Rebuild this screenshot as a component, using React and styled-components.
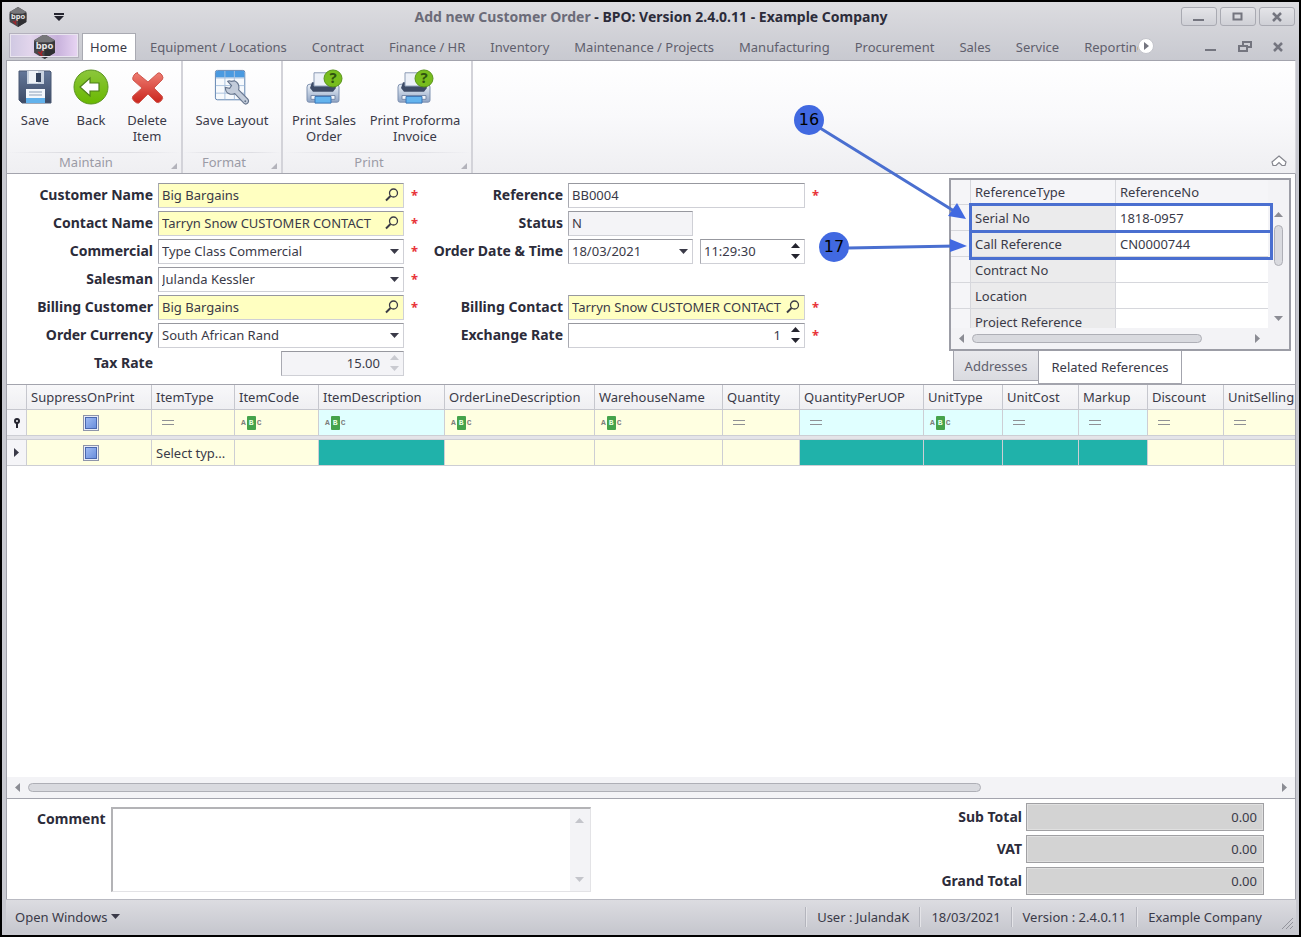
import React from 'react';
import styled, { createGlobalStyle, ThemeProvider } from 'styled-components';

const theme = {
  font: '"Noto Sans", "Open Sans", sans-serif',
  text: '#3a3a48',
  strong: '#2c2c3a',
  muted: '#5f5f6d',
  line: '#a3a4ad',
  softLine: '#cfd0d6',
  lookup: '#ffffc1',
  accent: '#4169e1',
};

const GlobalStyle = createGlobalStyle`
  *, *::before, *::after { box-sizing: border-box; }
  body { margin: 0; }
  body, button, input, select, textarea {
    font-family: ${theme.font};
    font-size: 13px;
    line-height: 16px;
    color: ${theme.text};
  }
  button { padding: 0; border: 0; background: none; }
  svg { display: block; flex: none; }
`;

const Window = styled.div`
  min-height: 100vh;
  display: flex;
  flex-direction: column;
  padding: 0 3px 2px 4px;
  border: 2px solid #000;
  background: linear-gradient(#dcdce0, #c8c9d0 58px, #c8c9d0);
  overflow: hidden;
`;

/* ---------- title bar ---------- */

const TitleBar = styled.header`
  display: grid;
  grid-template-columns: 1fr auto 1fr;
  align-items: center;
  height: 29px;
`;

const TitleLeft = styled.div`
  display: flex;
  align-items: center;
  gap: 26px;
  padding-left: 2px;
`;

const Title = styled.h1`
  margin: 0;
  font-size: 14px;
  font-weight: 700;
  white-space: nowrap;
  color: ${({ theme }) => theme.strong};

  span { color: #6b6b78; }
`;

const WindowButtons = styled.div`
  display: flex;
  justify-content: flex-end;
  gap: 3px;
  padding-right: 1px;
`;

const WindowButton = styled.button`
  display: grid;
  place-items: center;
  width: 36px;
  height: 19px;
  border: 1px solid #a9aab2;
  border-radius: 3px;
  background: linear-gradient(#e4e4e8, #cfd0d6);
  color: #74757f;
`;

/* ---------- ribbon tabs ---------- */

const TabRow = styled.nav`
  display: flex;
  align-items: flex-end;
  height: 29px;
  padding-left: 3px;
`;

const AppButton = styled.button`
  display: grid;
  place-items: center;
  width: 70px;
  height: 25px;
  margin: 0 3px 2px 0;
  border: 1px solid #b4b1bd;
  outline: 1px solid #e9e5ef;
  outline-offset: -2px;
  background: linear-gradient(90deg, #cfc8e2, #e2d5ec 30%, #c8b2dc 70%, #e8d5f3);
`;

const RibbonTab = styled.button`
  flex: ${({ $clip }) => ($clip ? '0 0 67px' : 'none')};
  height: 27px;
  padding: ${({ $active }) => ($active ? '0 8px 0 7px' : '0 12px 0 11px')};
  padding-right: ${({ $clip }) => $clip && '0'};
  margin-right: ${({ $active }) => ($active ? '2px' : '0')};
  border: 1px solid transparent;
  border-width: 1px 1px 0;
  overflow: hidden;
  text-align: left;
  white-space: nowrap;
  color: ${({ theme, $active }) => ($active ? theme.text : theme.muted)};
  ${({ $active }) => $active && 'background: #fff; border-color: #a9aab2;'}
`;

const ScrollTabs = styled.button`
  align-self: center;
  margin-left: -1px;
`;

const ChildButtons = styled.div`
  display: flex;
  align-items: center;
  gap: 21px;
  height: 27px;
  margin-left: auto;
  padding-right: 12px;

  button { color: #74757f; }
`;

/* ---------- ribbon ---------- */

const Ribbon = styled.section`
  display: flex;
  height: 114px;
  border: 1px solid ${({ theme }) => theme.line};
  border-right-color: #d8d8de;
  background: linear-gradient(#fff, #f9f9fb 50%, #efeff2);
`;

const Group = styled.div`
  display: flex;
  flex-direction: column;
  border-right: 2px solid #d3d3d9;
`;

const GroupButtons = styled.div`
  flex: 1;
  display: flex;
  padding-right: ${({ $flush }) => ($flush ? '0' : '6px')};
`;

const GroupCaption = styled.div`
  position: relative;
  height: 21px;
  padding: 2px 16px 0 0;
  background: linear-gradient(90deg, transparent, #dedee3 30%, #dedee3 70%, transparent) top / 100% 1px no-repeat;
  text-align: center;
  color: #9b9ba6;

  &::after {
    content: '';
    position: absolute;
    right: 4px;
    bottom: 4px;
    border: 3px solid #b3b3bb;
    border-top-color: transparent;
    border-left-color: transparent;
  }
`;

const ToolButton = styled.button`
  display: flex;
  flex-direction: column;
  align-items: center;
  gap: 7px;
  width: ${({ $width }) => $width}px;
  padding-top: 8px;
`;

const Collapse = styled.button`
  align-self: flex-end;
  margin: 0 8px 6px auto;
`;

/* ---------- order form ---------- */

const FormArea = styled.form`
  display: flex;
  align-items: flex-start;
  min-height: 210px;
  padding: 4px 4px 0 30px;
  border-left: 1px solid ${({ theme }) => theme.line};
  border-right: 1px solid ${({ theme }) => theme.line};
  background: #fff;
`;

const Fields = styled.div`
  display: grid;
  grid-template-columns: ${({ $label, $field }) => `${$label}px ${$field}px 20px`};
  grid-auto-rows: 24px;
  gap: 4px 5px;
  align-items: center;
  padding-top: 5px;
`;

const Label = styled.label`
  grid-column: 1;
  justify-self: end;
  font-size: 14px;
  font-weight: 700;
  white-space: nowrap;
  color: ${({ theme }) => theme.strong};
`;

const Box = styled.div`
  display: flex;
  align-items: center;
  justify-self: ${({ $end }) => ($end ? 'end' : 'start')};
  width: ${({ $width }) => ($width ? `${$width}px` : '100%')};
  height: 25px;
  padding-right: 4px;
  border: 1px solid ${({ theme }) => theme.softLine};
  border-top-color: #97989f;
  border-left-color: #a9aab2;
  background: ${({ theme, $kind }) =>
    $kind === 'lookup' ? theme.lookup : $kind === 'readonly' ? '#f4f4f7' : '#fff'};
`;

const control = `
  flex: 1;
  min-width: 0;
  width: 100%;
  height: 100%;
  border: 0;
  outline: 0;
  background: transparent;
  appearance: none;
`;

const Input = styled.input`
  ${control}
  padding: 0 2px 0 3px;
  text-align: ${({ $right }) => ($right ? 'right' : 'left')};
  ${({ $right }) => $right && 'padding-right: 10px;'}
`;

const Select = styled.select`
  ${control}
  padding: 0 3px;
`;

const Pair = styled.div`
  display: flex;
  justify-content: space-between;
`;

const Required = styled.span`
  grid-column: 3;
  padding-left: 2px;
  font-weight: 700;
  color: #e8343a;
`;

const Spinner = styled.span`
  display: grid;
  gap: 6px;
  color: ${({ $off }) => ($off ? '#c9cad0' : '#24242e')};
`;

/* ---------- related references ---------- */

const References = styled.aside`
  position: relative;
  width: 342px;
  margin-left: auto;
`;

const Panel = styled.div`
  display: grid;
  grid-template-columns: 1fr 21px;
  grid-template-rows: 25px 123px 21px;
  border: 2px solid #9c9da6;
  background: #f3f3f6;
`;

const ClipArea = styled.div`
  grid-area: 1 / 1 / 3 / 2;
  overflow: hidden;
  background: #fff;
`;

const RefTable = styled.table`
  width: 100%;
  border-collapse: separate;
  border-spacing: 0;
  table-layout: fixed;

  th, td {
    height: 26px;
    padding: 0 4px;
    border-right: 1px solid #d6d7dc;
    border-bottom: 1px solid #d6d7dc;
    text-align: left;
    font-weight: 400;
    background: #fff;
  }
  thead th { height: 25px; background: #f5f5f8; }
  tbody th { background: #f5f5f8; }
  tbody td:nth-child(2) { background: #ebebec; }
  th:last-child, td:last-child { border-right: 0; }
`;

const VScroll = styled.div`
  grid-area: 2 / 2;
  display: flex;
  flex-direction: column;
  align-items: center;
  padding: 7px 0;
  gap: 8px;
  color: #8b8c94;
`;

const HScroll = styled.div`
  grid-area: 3 / 1;
  display: flex;
  align-items: center;
  gap: 8px;
  height: 21px;
  padding: 0 8px;
  background: #f3f3f6;
  color: #8b8c94;
`;

const Thumb = styled.span`
  flex: ${({ $grow }) => $grow || 'none'};
  width: ${({ $tall }) => $tall && '9px'};
  height: ${({ $tall }) => $tall || 9}px;
  border: 1px solid #aeafb6;
  border-radius: 5px;
  background: #d9dadf;
`;

const Gap = styled.span`
  flex: ${({ $grow }) => $grow};
`;

const PanelTabs = styled.div`
  display: flex;
  align-items: flex-start;
  padding-left: 4px;
`;

const PanelTab = styled.button`
  width: ${({ $active }) => ($active ? 144 : 86)}px;
  height: ${({ $active }) => ($active ? 33 : 30)}px;
  border: 1px solid #a3a4ad;
  border-top: 0;
  margin-left: ${({ $active }) => ($active ? '-1px' : '0')};
  white-space: nowrap;
  background: ${({ $active }) => ($active ? '#fff' : 'linear-gradient(#e9e9ed, #dadbe0)')};
  color: ${({ theme, $active }) => ($active ? theme.text : theme.muted)};
`;

const Highlight = styled.div`
  position: absolute;
  top: ${({ $top }) => $top}px;
  left: 20px;
  right: 18px;
  height: 30px;
  border: 3px solid #4a6fd0;
  pointer-events: none;
`;

const Arrows = styled.svg`
  position: absolute;
  top: -80px;
  left: -160px;
  pointer-events: none;
`;

const Callout = styled.span`
  position: absolute;
  top: ${({ $top }) => $top}px;
  left: ${({ $left }) => $left}px;
  width: 30px;
  height: 30px;
  border-radius: 50%;
  background: ${({ theme }) => theme.accent};
  font-family: "DejaVu Sans", sans-serif;
  font-size: 16px;
  line-height: 30px;
  text-align: center;
  color: #000;
`;

/* ---------- order lines ---------- */

const Lines = styled.section`
  flex: 1;
  display: flex;
  flex-direction: column;
  min-height: 300px;
  border: 1px solid ${({ theme }) => theme.line};
  background: #fff;
`;

const LinesClip = styled.div`
  flex: 1;
  overflow: hidden;
`;

const LineTable = styled.table`
  width: 1321px;
  table-layout: fixed;
  border-collapse: separate;
  border-spacing: 0;

  th {
    height: 25px;
    padding: 0 4px;
    border-right: 1px solid #c6c7ce;
    border-bottom: 1px solid #c6c7ce;
    background: linear-gradient(#f8f8fa, #efeff2);
    font-weight: 400;
    text-align: left;
    white-space: nowrap;
  }
`;

const cellColors = { cream: '#ffffe1', cyan: '#e0ffff', teal: '#20b2aa', head: '#f5f5f8' };

const Cell = styled.td`
  height: 26px;
  padding: 0 0 0 4px;
  border-right: 1px solid #cdced4;
  border-bottom: 1px solid #cdced4;
  background: ${({ $tone }) => cellColors[$tone]};
  white-space: nowrap;
`;

const Divider = styled.td`
  height: 4px;
  padding: 0;
  border-bottom: 1px solid #cdced4;
  background: #e4e4e8;
`;

const RowMark = styled.div`
  display: grid;
  place-items: center;
  padding-right: 4px;
`;

const CheckBox = styled.input`
  appearance: none;
  display: block;
  width: 16px;
  height: 16px;
  margin: 0 auto;
  border: 1px solid #8e95aa;
  background: linear-gradient(135deg, #a9c3f5, #5f86d8);
  box-shadow: inset 0 0 0 1px #e8ecf6, inset 0 0 0 2px #4968ae;
`;

const Equals = styled.span`
  display: block;
  width: 12px;
  height: 5px;
  margin-left: 6px;
  border: 1px solid #8f9095;
  border-width: 1px 0;
`;

const Abc = styled.span`
  display: flex;
  align-items: center;
  gap: 1px;
  margin-left: 2px;
  font-family: "Liberation Mono", monospace;
  font-size: 8px;
  line-height: 14px;
  font-weight: 700;
  color: #7d7d7d;

  b {
    padding: 0 2px;
    border-radius: 1px;
    background: #45a34b;
    color: #e9ffe6;
  }
`;

/* ---------- totals and status ---------- */

const Footer = styled.section`
  display: flex;
  justify-content: space-between;
  height: 100px;
  padding: 4px 31px 0 30px;
  border-left: 1px solid ${({ theme }) => theme.line};
  border-right: 1px solid ${({ theme }) => theme.line};
  background: #fff;
`;

const CommentRow = styled.div`
  display: flex;
  gap: 5px;
  padding-top: 4px;

  label { padding-top: 4px; }
`;

const CommentBox = styled.div`
  display: flex;
  width: 480px;
  height: 85px;
  border: 1px solid #e3e3e6;
  border-top: 2px solid #b3b3b6;
  border-left: 2px solid #b3b3b6;
`;

const CommentArea = styled.textarea`
  flex: 1;
  border: 0;
  outline: 0;
  resize: none;
`;

const CommentScroll = styled.div`
  display: flex;
  flex-direction: column;
  justify-content: space-between;
  align-items: center;
  width: 20px;
  padding: 9px 0;
  background: #f3f3f6;
  color: #c4c5cb;
`;

const Totals = styled.div`
  display: grid;
  grid-template-columns: auto 238px;
  grid-auto-rows: 28px;
  gap: 4px 4px;
  align-items: center;
`;

const Total = styled.input`
  height: 28px;
  padding: 0 6px;
  border: 1px solid #a0a0a3;
  background: #d3d3d3;
  outline: 1px solid #e0e0e0;
  outline-offset: -2px;
  text-align: right;
`;

const StatusBar = styled.footer`
  display: flex;
  align-items: center;
  height: 34px;
  padding: 0 2px 0 9px;
  border-top: 1px solid #b9bac2;
  background: linear-gradient(#dcdce1, #c6c7ce);
`;

const OpenWindows = styled.button`
  display: flex;
  align-items: center;
  gap: 4px;
  margin-right: auto;
`;

const StatusItem = styled.span`
  padding: 2px 10px 2px 11px;
  border-left: 1px solid #b4b5bd;
  box-shadow: inset 1px 0 #e4e4e8;
`;

const Grip = styled.svg`
  align-self: flex-end;
  margin: 0 0 3px 9px;
`;

/* ---------- drawings ---------- */

const shapes = {
  down: 'M0 0h9L4.500 5z',
  up: 'M0 5h9L4.500 0z',
  left: 'M5 0v9L0 4.500z',
  right: 'M0 0v9l5-4.500z',
};

const Arrow = ({ dir = 'down' }) => {
  const flat = dir === 'down' || dir === 'up';
  return (
    <svg width={flat ? 9 : 5} height={flat ? 5 : 9} fill="currentColor" aria-hidden="true">
      <path d={shapes[dir]} />
    </svg>
  );
};

const Logo = ({ size }) => (
  <svg width={size} height={size} viewBox="0 0 22 24" aria-hidden="true">
    <path d="M11 0l10 6v12l-10 6L1 18V6z" fill="#48484b" />
    <path d="M11 0l10 6-10 5L1 6z" fill="#77777a" />
    <path d="M11 12v12l10-6V7z" fill="#2f2f32" />
    <path d="M1 8h20v7H1z" fill="#3a3a3d" />
    <text x="11" y="14" fill="#e6e6e6" fontSize="9" fontWeight="700" textAnchor="middle">bpo</text>
    <path d="M5 17l4 4M9 16l-2 4" stroke="#a3242b" strokeWidth="1.500" />
  </svg>
);

const Lens = () => (
  <svg width="14" height="14" viewBox="0 0 14 14" fill="none" stroke="#3b3b46" aria-hidden="true">
    <circle cx="8.500" cy="5" r="4" strokeWidth="1.300" />
    <path d="M5.500 8L1 12.500" strokeWidth="2" />
  </svg>
);

const SaveIcon = () => (
  <svg width="36" height="36" viewBox="0 0 36 36" aria-hidden="true">
    <defs>
      <linearGradient id="disk" x2="0" y2="1">
        <stop stopColor="#64789a" />
        <stop offset="1" stopColor="#3c4a64" />
      </linearGradient>
    </defs>
    <path d="M2 2h31l1 1v31H5l-3-3z" fill="url(#disk)" stroke="#4a5872" />
    <path d="M10 2h17v13H10z" fill="#c9d3e0" />
    <path d="M12 2h9v12h-9z" fill="#f0f4f8" />
    <path d="M19 4h5v9h-5z" fill="#33425c" />
    <path d="M9 20h19v14H9z" fill="#f4f8fc" />
    <path d="M9 29h19v5H9z" fill="#62b2ec" />
    <path d="M12 23h13M12 26h13" stroke="#8da0b8" />
  </svg>
);

const BackIcon = () => (
  <svg width="36" height="36" viewBox="0 0 36 36" aria-hidden="true">
    <defs>
      <linearGradient id="leaf" x2="0" y2="1">
        <stop stopColor="#8cc63c" />
        <stop offset="1" stopColor="#69b800" />
      </linearGradient>
    </defs>
    <circle cx="18" cy="18" r="17" fill="url(#leaf)" stroke="#5b9420" />
    <path d="M7 18l10-9v5h9v8h-9v5z" fill="#fff" stroke="#4d7f18" strokeWidth="1.200" />
  </svg>
);

const DeleteIcon = () => (
  <svg width="36" height="36" viewBox="0 0 36 36" aria-hidden="true">
    <defs>
      <linearGradient id="cross" x2="0" y2="1">
        <stop stopColor="#ee7d72" />
        <stop offset="1" stopColor="#c9241c" />
      </linearGradient>
    </defs>
    <path
      d="M8 4l11 9 10-9q2-1 4 2t0 5l-8 8 8 8q2 2-1 5t-5 1l-8-8-9 9q-2 1-5-2t-1-5l9-8-9-8q-1-2 1-5t4-2z"
      fill="url(#cross)"
      stroke="#cf584f"
      strokeLinejoin="round"
    />
  </svg>
);

const LayoutIcon = () => (
  <svg width="36" height="36" viewBox="0 0 38 38" aria-hidden="true">
    <rect x="1.500" y="1.500" width="31" height="31" rx="2" fill="#f7fafd" stroke="#5b7fae" />
    <path d="M2 3q0-1 1-1h28q1 0 1 1v6H2z" fill="#4a9ae0" />
    <path
      d="M2 9.500h30M2 17.500h30M2 25.500h30M11.500 2v30M21.500 2v30"
      stroke="#a9c2de"
      fill="none"
    />
    <path
      d="M18 13q-2-1-3.500 0l4 4.500-2 3-4.500-1q0 6 5 7 3 .5 5-.5l9.500 10q2 2 4 0t0-4.500L26 22q1.500-7-4.500-9.500z"
      fill="#c3ccda"
      stroke="#66758d"
      strokeWidth="1.200"
    />
    <circle cx="33" cy="34" r="1" fill="#66758d" />
  </svg>
);

const PrintIcon = () => (
  <svg width="38" height="36" viewBox="0 0 38 38" preserveAspectRatio="none" aria-hidden="true">
    <defs>
      <linearGradient id="body" x2="0" y2="1">
        <stop stopColor="#eef3f9" />
        <stop offset="1" stopColor="#8fa4c4" />
      </linearGradient>
    </defs>
    <path d="M2 19q0-3 3-3h26q3 0 3 3v14q0 2-2 2H4q-2 0-2-2z" fill="url(#body)" stroke="#7c8fae" />
    <path d="M7 14h22l2 6-3 4H8l-3-4z" fill="#3e4b66" />
    <path d="M9 4h17v14H9z" fill="#edf1f8" stroke="#8a9ab4" />
    <path d="M6 28h24v4H6z" fill="#f4f7fa" stroke="#7488a8" />
    <path d="M10 29h16v7H10z" fill="#64b4ee" stroke="#3b74b4" />
    <circle cx="28" cy="10" r="9" fill="#78bd1e" stroke="#569218" />
    <text x="28" y="15" fill="#2f5410" fontSize="15" fontWeight="700" textAnchor="middle">?</text>
  </svg>
);

const MinIcon = () => (
  <svg width="12" height="11" aria-hidden="true">
    <path d="M0 9h11" stroke="currentColor" strokeWidth="2" />
  </svg>
);

const MaxIcon = () => (
  <svg width="12" height="10" aria-hidden="true">
    <path d="M1.500 1.500h8v6h-8z" fill="none" stroke="currentColor" strokeWidth="2" />
  </svg>
);

const RestoreIcon = () => (
  <svg width="14" height="12" fill="none" stroke="currentColor" strokeWidth="2" aria-hidden="true">
    <path d="M1 5h8v5H1zM5 4V1h8v5h-3" />
  </svg>
);

const CloseIcon = () => (
  <svg width="11" height="10" aria-hidden="true">
    <path d="M1 1l8 8M9 1L1 9" stroke="currentColor" strokeWidth="2.500" />
  </svg>
);

/* ---------- data ---------- */

const tabs = [
  'Home', 'Equipment / Locations', 'Contract', 'Finance / HR', 'Inventory',
  'Maintenance / Projects', 'Manufacturing', 'Procurement', 'Sales', 'Service', 'Reporting',
];

const references = [
  ['Serial No', '1818-0957'],
  ['Call Reference', 'CN0000744'],
  ['Contract No', ''],
  ['Location', ''],
  ['Project Reference', ''],
];

const columns = [
  { name: 'SuppressOnPrint', width: 125, filter: 'check', tone: 'cream' },
  { name: 'ItemType', width: 83, filter: 'equals', tone: 'cream', value: 'Select typ...' },
  { name: 'ItemCode', width: 84, filter: 'abc', tone: 'cream' },
  { name: 'ItemDescription', width: 126, filter: 'abc', tone: 'cyan' },
  { name: 'OrderLineDescription', width: 150, filter: 'abc', tone: 'cream' },
  { name: 'WarehouseName', width: 128, filter: 'abc', tone: 'cream' },
  { name: 'Quantity', width: 77, filter: 'equals', tone: 'cream' },
  { name: 'QuantityPerUOP', width: 124, filter: 'equals', tone: 'cyan' },
  { name: 'UnitType', width: 79, filter: 'abc', tone: 'cyan' },
  { name: 'UnitCost', width: 76, filter: 'equals', tone: 'cyan' },
  { name: 'Markup', width: 69, filter: 'equals', tone: 'cyan' },
  { name: 'Discount', width: 76, filter: 'equals', tone: 'cream' },
  { name: 'UnitSellingPrice', width: 104, filter: 'equals', tone: 'cream' },
];

const totals = ['Sub Total', 'VAT', 'Grand Total'];

/* ---------- field helpers ---------- */

const Lookup = ({ id, label, value }) => (
  <>
    <Label htmlFor={id}>{label}</Label>
    <Box $kind="lookup">
      <Input id={id} defaultValue={value} />
      <button type="button" aria-label={`Find ${label}`}><Lens /></button>
    </Box>
    <Required>*</Required>
  </>
);

const DropDown = ({ id, label, value, required }) => (
  <>
    <Label htmlFor={id}>{label}</Label>
    <Box>
      <Select id={id}><option>{value}</option></Select>
      <Arrow />
    </Box>
    {required && <Required>*</Required>}
  </>
);

const Spin = ({ off }) => (
  <Spinner $off={off}>
    <Arrow dir="up" />
    <Arrow />
  </Spinner>
);

const FilterMark = ({ kind, name }) => {
  if (kind === 'check') return <CheckBox type="checkbox" aria-label={`Filter ${name}`} />;
  if (kind === 'abc') return <Abc>A<b>B</b>C</Abc>;
  return <Equals />;
};

const App = () => (
  <ThemeProvider theme={theme}>
    <GlobalStyle />
    <Window>
      <TitleBar>
        <TitleLeft>
          <Logo size={20} />
          <svg width="10" height="8" fill="#24242e" aria-hidden="true">
            <path d="M0 0h10v2H0zM0 3h10L5 8z" />
          </svg>
        </TitleLeft>
        <Title><span>Add new Customer Order</span> - BPO: Version 2.4.0.11 - Example Company</Title>
        <WindowButtons>
          <WindowButton aria-label="Minimize"><MinIcon /></WindowButton>
          <WindowButton aria-label="Maximize"><MaxIcon /></WindowButton>
          <WindowButton aria-label="Close"><CloseIcon /></WindowButton>
        </WindowButtons>
      </TitleBar>

      <TabRow>
        <AppButton aria-label="Application menu"><Logo size={25} /></AppButton>
        {tabs.map((tab, i) => (
          <RibbonTab key={tab} $active={i === 0} $clip={tab === 'Reporting'}>{tab}</RibbonTab>
        ))}
        <ScrollTabs aria-label="More tabs">
          <svg width="16" height="16">
            <circle cx="8" cy="8" r="7.500" fill="#fff" stroke="#c3c4cb" />
            <path d="M6 4v8l5-4z" fill="#74757f" />
          </svg>
        </ScrollTabs>
        <ChildButtons>
          <button aria-label="Minimize child"><MinIcon /></button>
          <button aria-label="Restore child"><RestoreIcon /></button>
          <button aria-label="Close child"><CloseIcon /></button>
        </ChildButtons>
      </TabRow>

      <Ribbon>
        <Group>
          <GroupButtons>
            <ToolButton $width={56}><SaveIcon />Save</ToolButton>
            <ToolButton $width={56}><BackIcon />Back</ToolButton>
            <ToolButton $width={56}><DeleteIcon />Delete Item</ToolButton>
          </GroupButtons>
          <GroupCaption>Maintain</GroupCaption>
        </Group>
        <Group>
          <GroupButtons $flush>
            <ToolButton $width={98}><LayoutIcon />Save Layout</ToolButton>
          </GroupButtons>
          <GroupCaption>Format</GroupCaption>
        </Group>
        <Group>
          <GroupButtons>
            <ToolButton $width={82}><PrintIcon />Print Sales Order</ToolButton>
            <ToolButton $width={100}><PrintIcon />Print Proforma Invoice</ToolButton>
          </GroupButtons>
          <GroupCaption>Print</GroupCaption>
        </Group>
        <Collapse aria-label="Collapse ribbon">
          <svg width="16" height="12" fill="#fff" stroke="#85868e" strokeWidth="1.200">
            <path d="M8 1l7 6-1 3.500h-3L8 7.500 5 10.500H2L1 7z" />
          </svg>
        </Collapse>
      </Ribbon>

      <FormArea onSubmit={(e) => e.preventDefault()}>
        <Fields $label={116} $field={246}>
          <Lookup id="customer" label="Customer Name" value="Big Bargains" />
          <Lookup id="contact" label="Contact Name" value="Tarryn Snow CUSTOMER CONTACT" />
          <DropDown id="commercial" label="Commercial" value="Type Class Commercial" required />
          <DropDown id="salesman" label="Salesman" value="Julanda Kessler" required />
          <Lookup id="billing" label="Billing Customer" value="Big Bargains" />
          <DropDown id="currency" label="Order Currency" value="South African Rand" />
          <Label htmlFor="tax">Tax Rate</Label>
          <Box $kind="readonly" $width={123} $end>
            <Input id="tax" defaultValue="15.00" readOnly $right />
            <Spin off />
          </Box>
        </Fields>

        <Fields $label={134} $field={237}>
          <Label htmlFor="reference">Reference</Label>
          <Box><Input id="reference" defaultValue="BB0004" /></Box>
          <Required>*</Required>
          <Label htmlFor="status">Status</Label>
          <Box $kind="readonly" $width={125}><Input id="status" defaultValue="N" readOnly /></Box>
          <Label htmlFor="date">Order Date &amp; Time</Label>
          <Pair>
            <Box $width={125}>
              <Input id="date" defaultValue="18/03/2021" />
              <Arrow />
            </Box>
            <Box $width={105}>
              <Input aria-label="Order time" defaultValue="11:29:30" />
              <Spin />
            </Box>
          </Pair>
          <Gap />
          <Label as="span" aria-hidden="true">&nbsp;</Label>
          <Gap />
          <Gap />
          <Lookup id="billing-contact" label="Billing Contact" value="Tarryn Snow CUSTOMER CONTACT" />
          <Label htmlFor="rate">Exchange Rate</Label>
          <Box>
            <Input id="rate" defaultValue="1" $right />
            <Spin />
          </Box>
          <Required>*</Required>
        </Fields>

        <References>
          <Panel>
            <ClipArea>
              <RefTable>
                <colgroup>
                  <col width="20" />
                  <col width="145" />
                  <col />
                </colgroup>
                <thead>
                  <tr><th /><th>ReferenceType</th><th>ReferenceNo</th></tr>
                </thead>
                <tbody>
                  {references.map(([type, no]) => (
                    <tr key={type}><th /><td>{type}</td><td>{no}</td></tr>
                  ))}
                </tbody>
              </RefTable>
            </ClipArea>
            <VScroll>
              <Arrow dir="up" />
              <Thumb $tall={41} />
              <Gap $grow={1} />
              <Arrow />
            </VScroll>
            <HScroll>
              <Arrow dir="left" />
              <Thumb $grow={86} />
              <Gap $grow={14} />
              <Arrow dir="right" />
            </HScroll>
          </Panel>
          <PanelTabs>
            <PanelTab type="button">Addresses</PanelTab>
            <PanelTab type="button" $active>Related References</PanelTab>
          </PanelTabs>
          <Highlight $top={25} />
          <Highlight $top={52} />
          <Arrows width="200" height="180" fill={theme.accent}>
            <path d="M31 30l134 83M59 150l108-2" stroke="#4a6fd0" strokeWidth="3" />
            <path d="M177 121l-18-3 9-13zM178 148l-17 6v-13z" />
          </Arrows>
          <Callout $top={-73} $left={-155}>16</Callout>
          <Callout $top={54} $left={-130}>17</Callout>
        </References>
      </FormArea>

      <Lines>
        <LinesClip>
          <LineTable>
            <colgroup>
              <col width="20" />
              {columns.map((c) => <col key={c.name} width={c.width} />)}
            </colgroup>
            <thead>
              <tr>
                <th />
                {columns.map((c) => <th key={c.name}>{c.name}</th>)}
              </tr>
            </thead>
            <tbody>
              <tr>
                <Cell $tone="head">
                  <RowMark>
                    <svg width="8" height="10" fill="none" stroke="#24242e" strokeWidth="2">
                      <circle cx="4" cy="3" r="2" />
                      <path d="M4 5v5" />
                    </svg>
                  </RowMark>
                </Cell>
                {columns.map((c) => (
                  <Cell key={c.name} $tone={c.tone}>
                    <FilterMark kind={c.filter} name={c.name} />
                  </Cell>
                ))}
              </tr>
              <tr><Divider colSpan={14} /></tr>
              <tr>
                <Cell $tone="head"><RowMark><Arrow dir="right" /></RowMark></Cell>
                {columns.map((c) => (
                  <Cell key={c.name} $tone={c.tone === 'cyan' ? 'teal' : 'cream'}>
                    {c.filter === 'check' ? <CheckBox type="checkbox" aria-label={c.name} /> : c.value}
                  </Cell>
                ))}
              </tr>
            </tbody>
          </LineTable>
        </LinesClip>
        <HScroll>
          <Arrow dir="left" />
          <Thumb $grow={954} />
          <Gap $grow={286} />
          <Arrow dir="right" />
        </HScroll>
      </Lines>

      <Footer>
        <CommentRow>
          <Label htmlFor="comment">Comment</Label>
          <CommentBox>
            <CommentArea id="comment" />
            <CommentScroll>
              <Arrow dir="up" />
              <Arrow />
            </CommentScroll>
          </CommentBox>
        </CommentRow>
        <Totals>
          {totals.map((name) => (
            <React.Fragment key={name}>
              <Label htmlFor={name}>{name}</Label>
              <Total id={name} defaultValue="0.00" readOnly />
            </React.Fragment>
          ))}
        </Totals>
      </Footer>

      <StatusBar>
        <OpenWindows>Open Windows <Arrow /></OpenWindows>
        <StatusItem>User : JulandaK</StatusItem>
        <StatusItem>18/03/2021</StatusItem>
        <StatusItem>Version : 2.4.0.11</StatusItem>
        <StatusItem>Example Company</StatusItem>
        <Grip width="13" height="13" stroke="#93949d" aria-hidden="true">
          <path d="M1 12L12 1M5 12l7-7M9 12l3-3" />
        </Grip>
      </StatusBar>
    </Window>
  </ThemeProvider>
);

export default App;
